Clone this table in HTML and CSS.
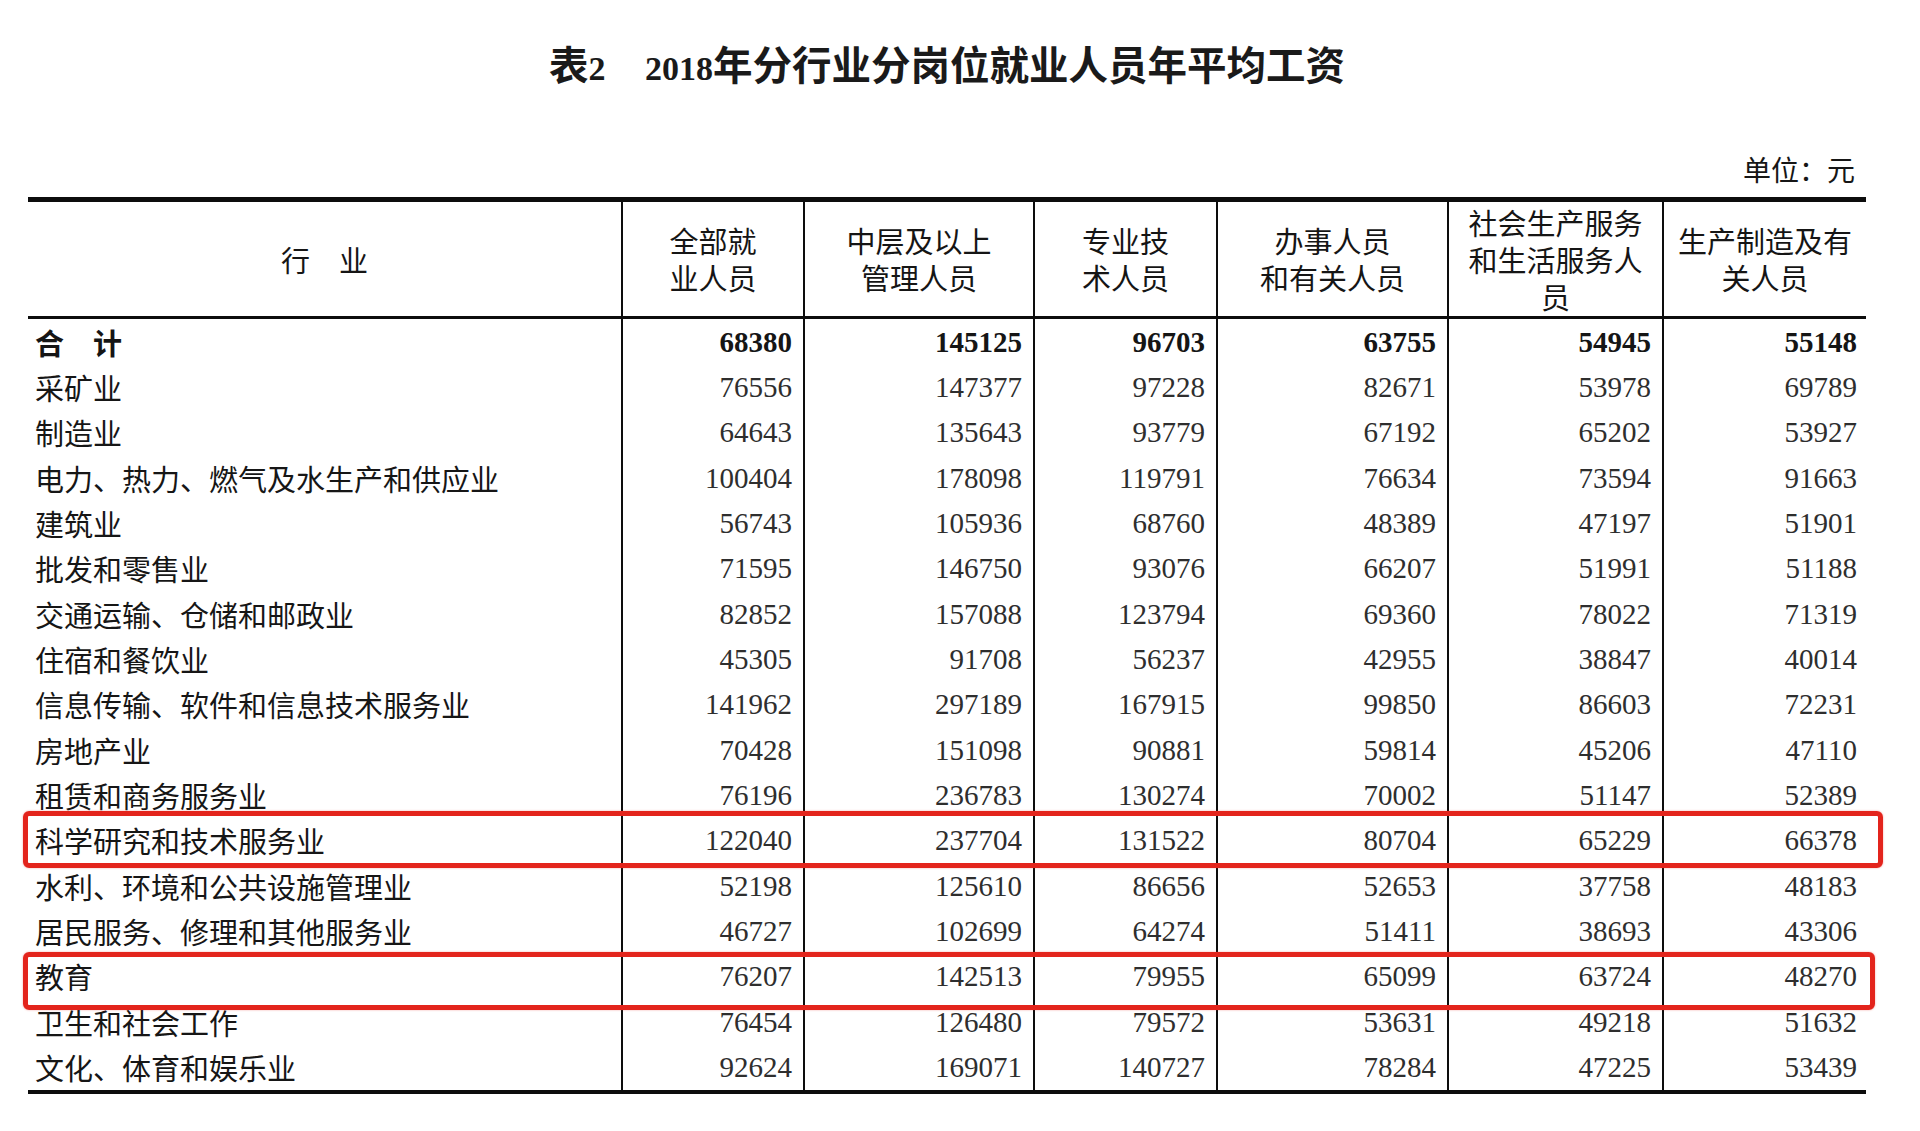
FILE: index.html
```html
<!DOCTYPE html>
<html lang="zh-CN">
<head>
<meta charset="utf-8">
<title>表2 2018年分行业分岗位就业人员年平均工资</title>
<link rel="stylesheet" href="styles.css">
</head>
<body>
<div class="page">
  <h1 class="title">表<span class="tnum">2</span>　<span class="tnum">2018</span>年分行业分岗位就业人员年平均工资</h1>
  <div class="unit">单位：元</div>
  <table class="wage">
    <colgroup>
      <col class="c-ind">
      <col class="c-1">
      <col class="c-2">
      <col class="c-3">
      <col class="c-4">
      <col class="c-5">
      <col class="c-6">
    </colgroup>
    <thead>
      <tr>
        <th>行　业</th>
        <th>全部就<br>业人员</th>
        <th>中层及以上<br>管理人员</th>
        <th>专业技<br>术人员</th>
        <th>办事人员<br>和有关人员</th>
        <th>社会生产服务<br>和生活服务人<br>员</th>
        <th>生产制造及有<br>关人员</th>
      </tr>
    </thead>
    <tbody>
      <tr class="total"><td>合　计</td><td>68380</td><td>145125</td><td>96703</td><td>63755</td><td>54945</td><td>55148</td></tr>
      <tr><td>采矿业</td><td>76556</td><td>147377</td><td>97228</td><td>82671</td><td>53978</td><td>69789</td></tr>
      <tr><td>制造业</td><td>64643</td><td>135643</td><td>93779</td><td>67192</td><td>65202</td><td>53927</td></tr>
      <tr><td>电力、热力、燃气及水生产和供应业</td><td>100404</td><td>178098</td><td>119791</td><td>76634</td><td>73594</td><td>91663</td></tr>
      <tr><td>建筑业</td><td>56743</td><td>105936</td><td>68760</td><td>48389</td><td>47197</td><td>51901</td></tr>
      <tr><td>批发和零售业</td><td>71595</td><td>146750</td><td>93076</td><td>66207</td><td>51991</td><td>51188</td></tr>
      <tr><td>交通运输、仓储和邮政业</td><td>82852</td><td>157088</td><td>123794</td><td>69360</td><td>78022</td><td>71319</td></tr>
      <tr><td>住宿和餐饮业</td><td>45305</td><td>91708</td><td>56237</td><td>42955</td><td>38847</td><td>40014</td></tr>
      <tr><td>信息传输、软件和信息技术服务业</td><td>141962</td><td>297189</td><td>167915</td><td>99850</td><td>86603</td><td>72231</td></tr>
      <tr><td>房地产业</td><td>70428</td><td>151098</td><td>90881</td><td>59814</td><td>45206</td><td>47110</td></tr>
      <tr><td>租赁和商务服务业</td><td>76196</td><td>236783</td><td>130274</td><td>70002</td><td>51147</td><td>52389</td></tr>
      <tr><td>科学研究和技术服务业</td><td>122040</td><td>237704</td><td>131522</td><td>80704</td><td>65229</td><td>66378</td></tr>
      <tr><td>水利、环境和公共设施管理业</td><td>52198</td><td>125610</td><td>86656</td><td>52653</td><td>37758</td><td>48183</td></tr>
      <tr><td>居民服务、修理和其他服务业</td><td>46727</td><td>102699</td><td>64274</td><td>51411</td><td>38693</td><td>43306</td></tr>
      <tr><td>教育</td><td>76207</td><td>142513</td><td>79955</td><td>65099</td><td>63724</td><td>48270</td></tr>
      <tr><td>卫生和社会工作</td><td>76454</td><td>126480</td><td>79572</td><td>53631</td><td>49218</td><td>51632</td></tr>
      <tr><td>文化、体育和娱乐业</td><td>92624</td><td>169071</td><td>140727</td><td>78284</td><td>47225</td><td>53439</td></tr>
    </tbody>
  </table>
  <div class="mark mark-1"></div>
  <div class="mark mark-2"></div>
</div>
</body>
</html>
```
FILE: styles.css
```css
* { box-sizing: border-box; }

html, body {
  margin: 0;
  padding: 0;
  background: #ffffff;
  overflow: hidden;
}

body {
  font-family: "Noto Sans CJK SC", "Noto Sans", sans-serif;
  color: #161616;
}

.page {
  position: relative;
  width: 1920px;
  height: 1131px;
  padding: 38px 54px 0 28px;
}

.title {
  margin: 0;
  height: 50px;
  line-height: 50px;
  width: 1838px;
  text-align: center;
  font-size: 39.5px;
  font-weight: 700;
  color: #1a1a1a;
  white-space: nowrap;
}

.tnum {
  font-family: "Liberation Serif", serif;
  font-size: 34px;
  font-weight: 700;
}

.unit {
  margin-top: 66px;
  height: 30px;
  line-height: 30px;
  width: 1838px;
  padding-right: 11px;
  text-align: right;
  font-size: 28px;
  color: #161616;
}

.wage {
  margin-top: 13px;
  width: 1838px;
  table-layout: fixed;
  border-collapse: separate;
  border-spacing: 0;
  border-top: 5px solid #0d0d0d;
  border-bottom: 4px solid #0d0d0d;
}

.c-ind { width: 593px; }
.c-1 { width: 182px; }
.c-2 { width: 230px; }
.c-3 { width: 183px; }
.c-4 { width: 231px; }
.c-5 { width: 215px; }
.c-6 { width: 204px; }

.wage thead tr { height: 117px; }

.wage th {
  padding: 0;
  font-weight: 400;
  font-size: 29px;
  line-height: 37px;
  text-align: center;
  vertical-align: middle;
  border-bottom: 3px solid #0d0d0d;
  white-space: nowrap;
  color: #151515;
}

.wage th + th,
.wage td + td {
  border-left: 2px solid #0d0d0d;
}

.wage tbody tr { height: 45.353px; }

.wage td {
  padding: 0 11px 0 7px;
  font-size: 29px;
  line-height: 30px;
  vertical-align: middle;
  white-space: nowrap;
  color: #161616;
}

.wage td + td {
  text-align: right;
  font-family: "Liberation Serif", serif;
  color: #2e2e2e;
}

.wage td:last-child { padding-right: 9px; }

.wage .total td {
  font-weight: 700;
  color: #151515;
}

.mark {
  position: absolute;
  border: 5px solid #e3241c;
  border-radius: 6px;
  box-shadow: 0 0 2px rgba(227, 36, 28, 0.45);
}

.mark-1 {
  left: 23px;
  top: 811px;
  width: 1860px;
  height: 57px;
}

.mark-2 {
  left: 23px;
  top: 952px;
  width: 1852px;
  height: 58px;
}
```
